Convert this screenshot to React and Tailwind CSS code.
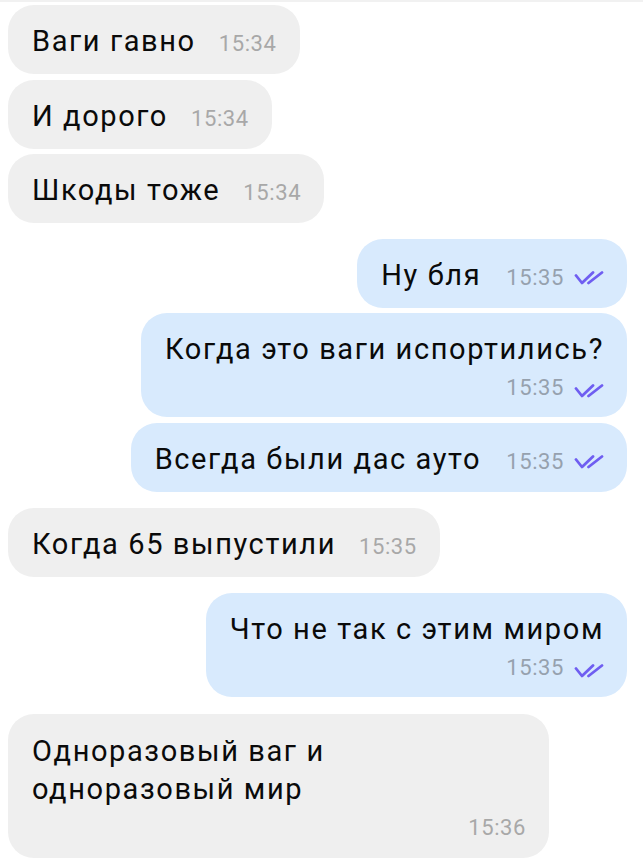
import React from "react";

const Check = () => (
  <svg
    width="30"
    height="14"
    viewBox="0 0 30 14"
    fill="none"
    stroke="#6f5ef1"
    strokeWidth="2.8"
    strokeLinecap="round"
    strokeLinejoin="round"
    className="ml-[10px] self-center translate-y-[3px]"
  >
    <path d="M2 4.5 L8 12 L19 1.5" />
    <path d="M14.5 12 L28 1.5" />
  </svg>
);

const textCls = "text-[29px] leading-[38px] tracking-[1.6px] text-[#0a0a0a]";
const timeGray = "text-[22px] leading-[26px] tracking-[0.6px] text-[#a8a8a8]";
const timeBlue = "text-[22px] leading-[26px] tracking-[0.6px] text-[#96a1ae]";

function InLeft({ text, time, className = "" }) {
  return (
    <div
      className={`self-start flex items-baseline rounded-[26px] bg-[#efefef] pl-[24px] pr-[23px] pt-[17px] pb-[14px] ${className}`}
    >
      <span className={textCls}>{text}</span>
      <span className={`ml-[23px] ${timeGray}`}>{time}</span>
    </div>
  );
}

function InRight({ text, time, className = "" }) {
  return (
    <div
      className={`self-end flex items-baseline rounded-[26px] bg-[#d8eafd] pl-[24px] pr-[23px] pt-[17px] pb-[14px] ${className}`}
    >
      <span className={textCls}>{text}</span>
      <span className={`ml-[25px] ${timeBlue}`}>{time}</span>
      <Check />
    </div>
  );
}

function StackRight({ text, time, className = "" }) {
  return (
    <div
      className={`self-end rounded-[26px] bg-[#d8eafd] pl-[24px] pr-[23px] pt-[17px] pb-[16px] ${className}`}
    >
      <div className={textCls}>{text}</div>
      <div className="mt-[7px] flex items-baseline justify-end">
        <span className={timeBlue}>{time}</span>
        <Check />
      </div>
    </div>
  );
}

export default function App() {
  return (
    <div className="w-[643px] h-[860px] overflow-hidden bg-white font-['Roboto',sans-serif]">
      <div className="h-[2px] w-full bg-[#f1f1f1]" />
      <div className="flex flex-col pl-[8px] pr-[16px] pt-[3px]">
        <InLeft text="Ваги гавно" time="15:34" />
        <InLeft text="И дорого" time="15:34" className="mt-[6px]" />
        <InLeft text="Шкоды тоже" time="15:34" className="mt-[5px]" />
        <InRight text="Ну бля" time="15:35" className="mt-[16px]" />
        <StackRight text="Когда это ваги испортились?" time="15:35" className="mt-[5px]" />
        <InRight text="Всегда были дас ауто" time="15:35" className="mt-[6px]" />
        <InLeft text="Когда 65 выпустили" time="15:35" className="mt-[16px]" />
        <StackRight text="Что не так с этим миром" time="15:35" className="mt-[16px]" />
        <div className="self-start mt-[17px] w-[541px] rounded-[26px] bg-[#efefef] pl-[24px] pr-[23px] pt-[18px] pb-[17px]">
          <div className={textCls}>
            Одноразовый ваг и
            <br />
            одноразовый мир
          </div>
          <div className="mt-[7px] flex justify-end">
            <span className={timeGray}>15:36</span>
          </div>
        </div>
        <div className="self-start mt-[4px] w-[520px] h-[60px] rounded-[26px] bg-[#efefef]" />
      </div>
    </div>
  );
}
